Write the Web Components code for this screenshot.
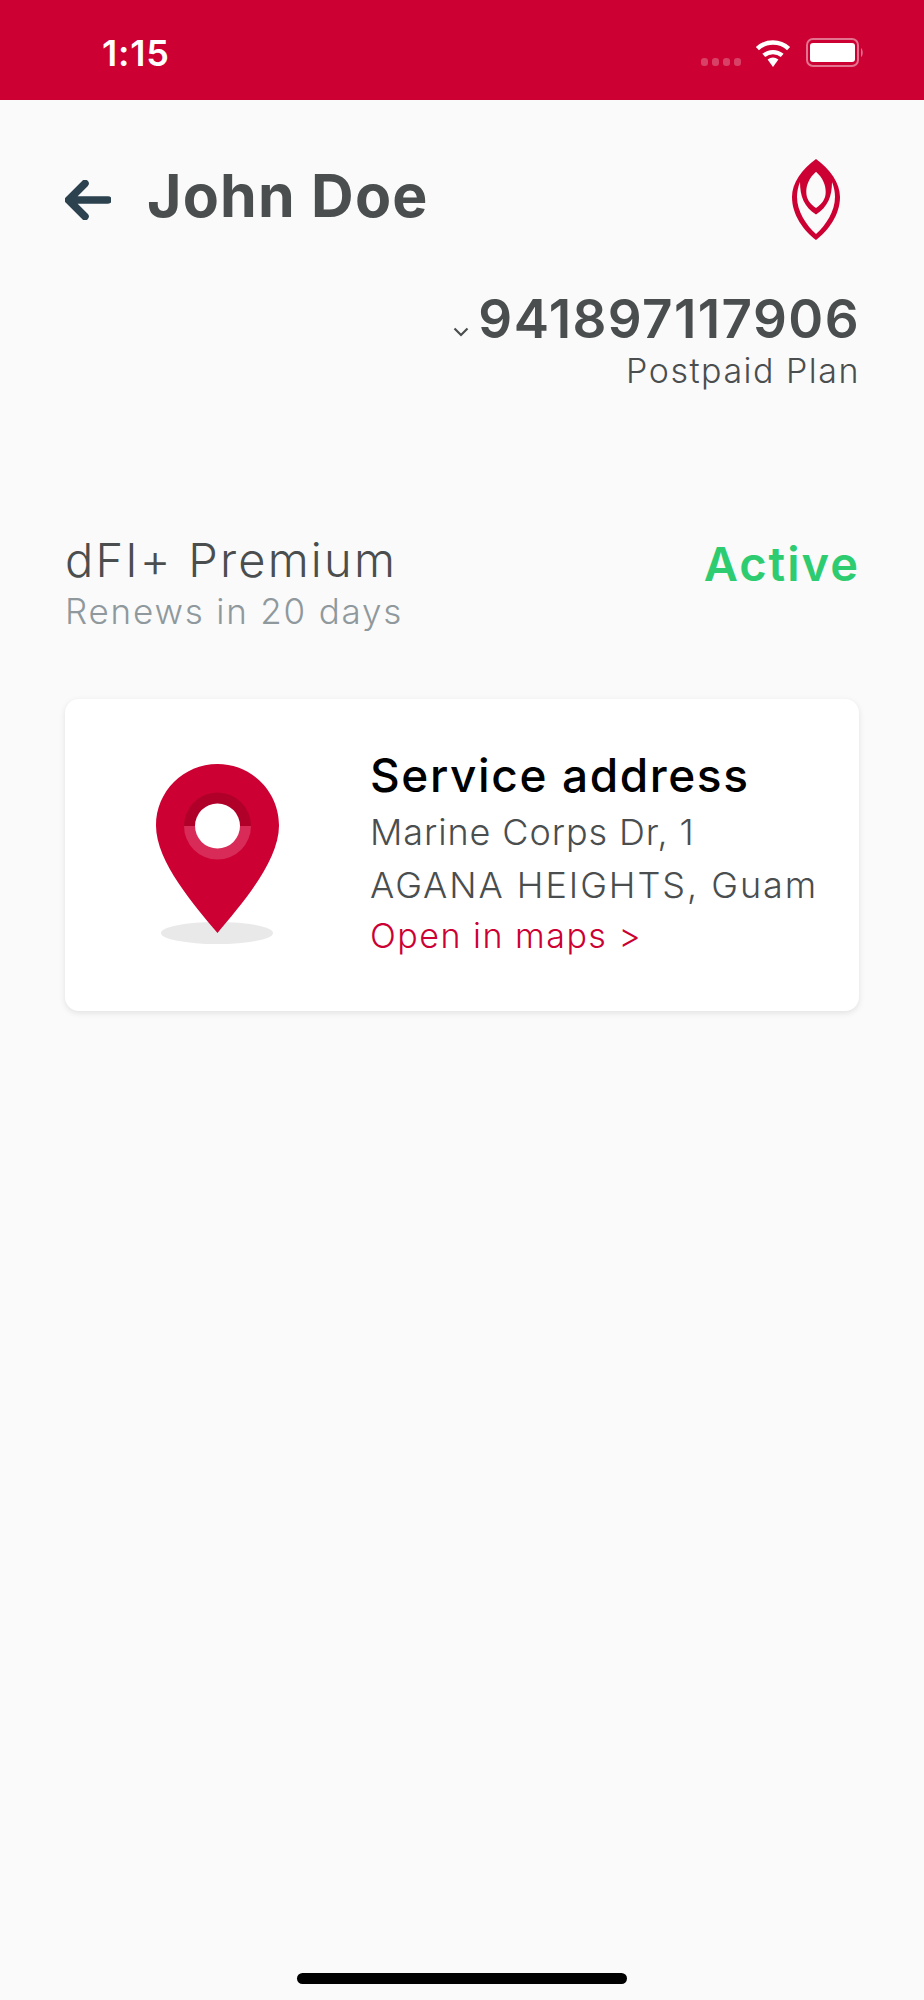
<!DOCTYPE html>
<html>
<head>
<meta charset="utf-8">
<title>Service address</title>
<style>
html, body { margin: 0; padding: 0; background: #FAFAFA; }
body { font-family: Inter, "Liberation Sans", sans-serif; }
app-screen { min-height: 2000px; }
</style>
</head>
<body>
<app-screen>
  <status-bar time="1:15"></status-bar>
  <app-header name="John Doe"></app-header>
  <line-picker number="941897117906" plan="Postpaid Plan"></line-picker>
  <plan-row name="dFI+ Premium" renews="Renews in 20 days" state="Active"></plan-row>
  <address-card title="Service address" line1="Marine Corps Dr, 1" line2="AGANA HEIGHTS, Guam" link="Open in maps &gt;"></address-card>
  <home-indicator></home-indicator>
</app-screen>

<script>
// small helper, every element below just fills its own open shadow root
function fill(el, html) {
    el.attachShadow({mode: 'open'}).innerHTML = html;
}

class AppScreen extends HTMLElement {
    connectedCallback() {
        fill(this, `
<style>
:host { display: flex; flex-direction: column; background: #FAFAFA; }
</style>
<slot></slot>`);
    }
}

class StatusBar extends HTMLElement {
    connectedCallback() {
        fill(this, `
<style>
:host { display: flex; align-items: flex-start; justify-content: space-between; height: 100px; box-sizing: border-box; padding: 32px 60px 0 102px; background: #CC0033; color: #FFF; }
.time { font: 600 36px/42px Inter, "Liberation Sans", sans-serif; letter-spacing: 0.8px; }
.icons { display: flex; align-items: flex-start; padding-top: 2px; }
.dots { display: flex; gap: 4px; margin: 24px 14px 0 0; }
.dots i { width: 7px; height: 8px; border-radius: 3px; background: rgba(255,255,255,0.25); }
svg { display: block; }
.wifi { margin: 5px 15px 0 0; }
.battery { margin-top: 4px; }
</style>
<span class="time">${this.getAttribute("time")}</span>
<div class="icons">
  <div class="dots"><i></i><i></i><i></i><i></i></div>
  <svg class="wifi" width="36" height="28" viewBox="0 0 36 28">
    <path d="M18 28 L12.6 20.6 A9 9 0 0 1 23.4 20.6 Z" fill="#FFF"/>
    <path d="M8.8 16.4 A14.5 14.5 0 0 1 27.2 16.4" fill="none" stroke="#FFF" stroke-width="4.4"/>
    <path d="M2.4 9.6 A23 23 0 0 1 33.6 9.6" fill="none" stroke="#FFF" stroke-width="4.6"/>
  </svg>
  <svg class="battery" width="58" height="30" viewBox="0 0 58 30">
    <rect x="1" y="1" width="51" height="27" rx="6" fill="none" stroke="#FFF" stroke-opacity="0.45" stroke-width="2"/>
    <rect x="4" y="5" width="45" height="19" rx="3" fill="#FFF"/>
    <path d="M55 10 C57 11 57.5 18 55 19 Z" fill="#FFF" fill-opacity="0.45"/>
  </svg>
</div>`);
    }
}

class AppHeader extends HTMLElement {
    connectedCallback() {
        fill(this, `
<style>
:host { display: flex; align-items: flex-start; padding: 59px 84px 0 65px; }
.back { margin: 21px 36px 0 0; display: block; }
h1 { flex: 1; margin: -2px 0 0; font: 700 59px/78px Inter, "Liberation Sans", sans-serif; color: #4A4E4F; letter-spacing: 1.2px; }
.logo { display: block; }
</style>
<svg class="back" width="46" height="40" viewBox="0 0 46 40">
  <path d="M20 3.500 L3.500 20 L20 36.500 M3.500 20 H43" fill="none" stroke="#2C424F" stroke-width="7.500" stroke-linecap="round" stroke-linejoin="round"/>
</svg>
<h1>${this.getAttribute("name")}</h1>
<svg class="logo" width="48" height="81" viewBox="0 0 48 81">
  <path fill-rule="evenodd" fill="#CC0033" d="M24 0 C38 10 48 24 48 38 C48 56 36 72 24 81 C12 72 0 56 0 38 C0 24 10 10 24 0 Z M24 12.700 C17 19 14.300 26 14.300 33 C14.300 40 18 45 24 49 C30 45 33.700 40 33.700 33 C33.700 26 31 19 24 12.700 Z M8 23 C6 28 5 33 5 38 C5 52 14 66 24 75 C34 66 43 52 43 38 C43 33 42 28 40 23 C40 37 36 48 24 55.500 C12 48 8 37 8 23 Z"/>
</svg>`);
    }
}

class LinePicker extends HTMLElement {
    connectedCallback() {
        fill(this, `
<style>
:host { display: flex; flex-direction: column; align-items: flex-end; padding: 0 64px 0 0; margin-top: 52px; color: #4A4E4F; }
.num { display: flex; align-items: flex-end; gap: 9px; font: 600 53px/55px Inter, "Liberation Sans", sans-serif; letter-spacing: 1.4px; }
.num svg { display: block; margin-bottom: 10px; }
.plan { margin-top: 4px; font: 300 34px/40px Inter, "Liberation Sans", sans-serif; letter-spacing: 1.5px; }
</style>
<div class="num">
  <svg width="16" height="10" viewBox="0 0 16 10"><path d="M1.5 1.5 L8 8 L14.500 1.5" fill="none" stroke="#4A4E4F" stroke-width="2.200"/></svg>
  <span>${this.getAttribute("number")}</span>
</div>
<div class="plan">${this.getAttribute("plan")}</div>`);
    }
}

class PlanRow extends HTMLElement {
    connectedCallback() {
        fill(this, `
<style>
:host { display: flex; justify-content: space-between; align-items: flex-start; padding: 0 64px 0 65px; margin-top: 135px; }
.name { font: 300 47px/67px Inter, "Liberation Sans", sans-serif; color: #4A4E4F; letter-spacing: 2.2px; }
.renews { font: 300 35px/36px Inter, "Liberation Sans", sans-serif; color: #8F999D; letter-spacing: 1.800px; }
.state { font: 600 47px/56px Inter, "Liberation Sans", sans-serif; color: #2ECC71; margin-top: 10px; letter-spacing: 2px; }
</style>
<div>
  <div class="name">${this.getAttribute("name")}</div>
  <div class="renews">${this.getAttribute("renews")}</div>
</div>
<div class="state">${this.getAttribute("state")}</div>`);
    }
}

class AddressCard extends HTMLElement {
    connectedCallback() {
        fill(this, `
<style>
:host { display: flex; box-sizing: border-box; margin: 70px 65px 0; height: 312px; background: #FFF; border-radius: 14px; box-shadow: 0 2px 6px rgba(0,0,0,0.10); }
.pin { display: block; margin: 65px 0 0 91px; flex: none; }
.text { margin: 46px 0 0 91px; }
h2 { margin: 0; font: 500 46px/61px Inter, "Liberation Sans", sans-serif; color: #000; letter-spacing: 1.600px; }
p { margin: 0; font: 300 36px/52px Inter, "Liberation Sans", sans-serif; color: #4A4E4F; letter-spacing: 0.9px; }
p.wide { margin-top: 1px; letter-spacing: 1.95px; }
a { display: block; font: 300 34px/50px Inter, "Liberation Sans", sans-serif; color: #CC0033; letter-spacing: 1.5px; }
</style>
<svg class="pin" width="123" height="181" viewBox="0 0 123 181">
  <ellipse cx="61" cy="169" rx="56" ry="11" fill="#E9E9E9"/>
  <path d="M61.500 0 C95.500 0 123 27.500 123 61.500 C123 98 84 142 61.500 169 C39 142 0 98 0 61.500 C0 27.500 27.500 0 61.500 0 Z" fill="#CC0033"/>
  <path d="M28 62 A33.500 33.500 0 0 1 95 62 Z" fill="#B00029"/>
  <path d="M28 62 A33.500 33.500 0 0 0 95 62 Z" fill="#D82B57"/>
  <circle cx="61.500" cy="62" r="22.500" fill="#FFF"/>
</svg>
<div class="text">
  <h2>${this.getAttribute("title")}</h2>
  <p>${this.getAttribute("line1")}</p>
  <p class="wide">${this.getAttribute("line2")}</p>
  <a>${this.getAttribute("link")}</a>
</div>`);
    }
}

class HomeIndicator extends HTMLElement {
    connectedCallback() {
        fill(this, `
<style>
:host { display: flex; justify-content: center; margin-top: auto; padding-bottom: 16px; }
i { display: block; width: 330px; height: 11px; border-radius: 6px; background: #000; }
</style>
<i></i>`);
    }
}

customElements.define("app-screen", AppScreen);
customElements.define("status-bar", StatusBar);
customElements.define("app-header", AppHeader);
customElements.define("line-picker", LinePicker);
customElements.define("plan-row", PlanRow);
customElements.define("address-card", AddressCard);
customElements.define("home-indicator", HomeIndicator);
</script>
</body>
</html>
